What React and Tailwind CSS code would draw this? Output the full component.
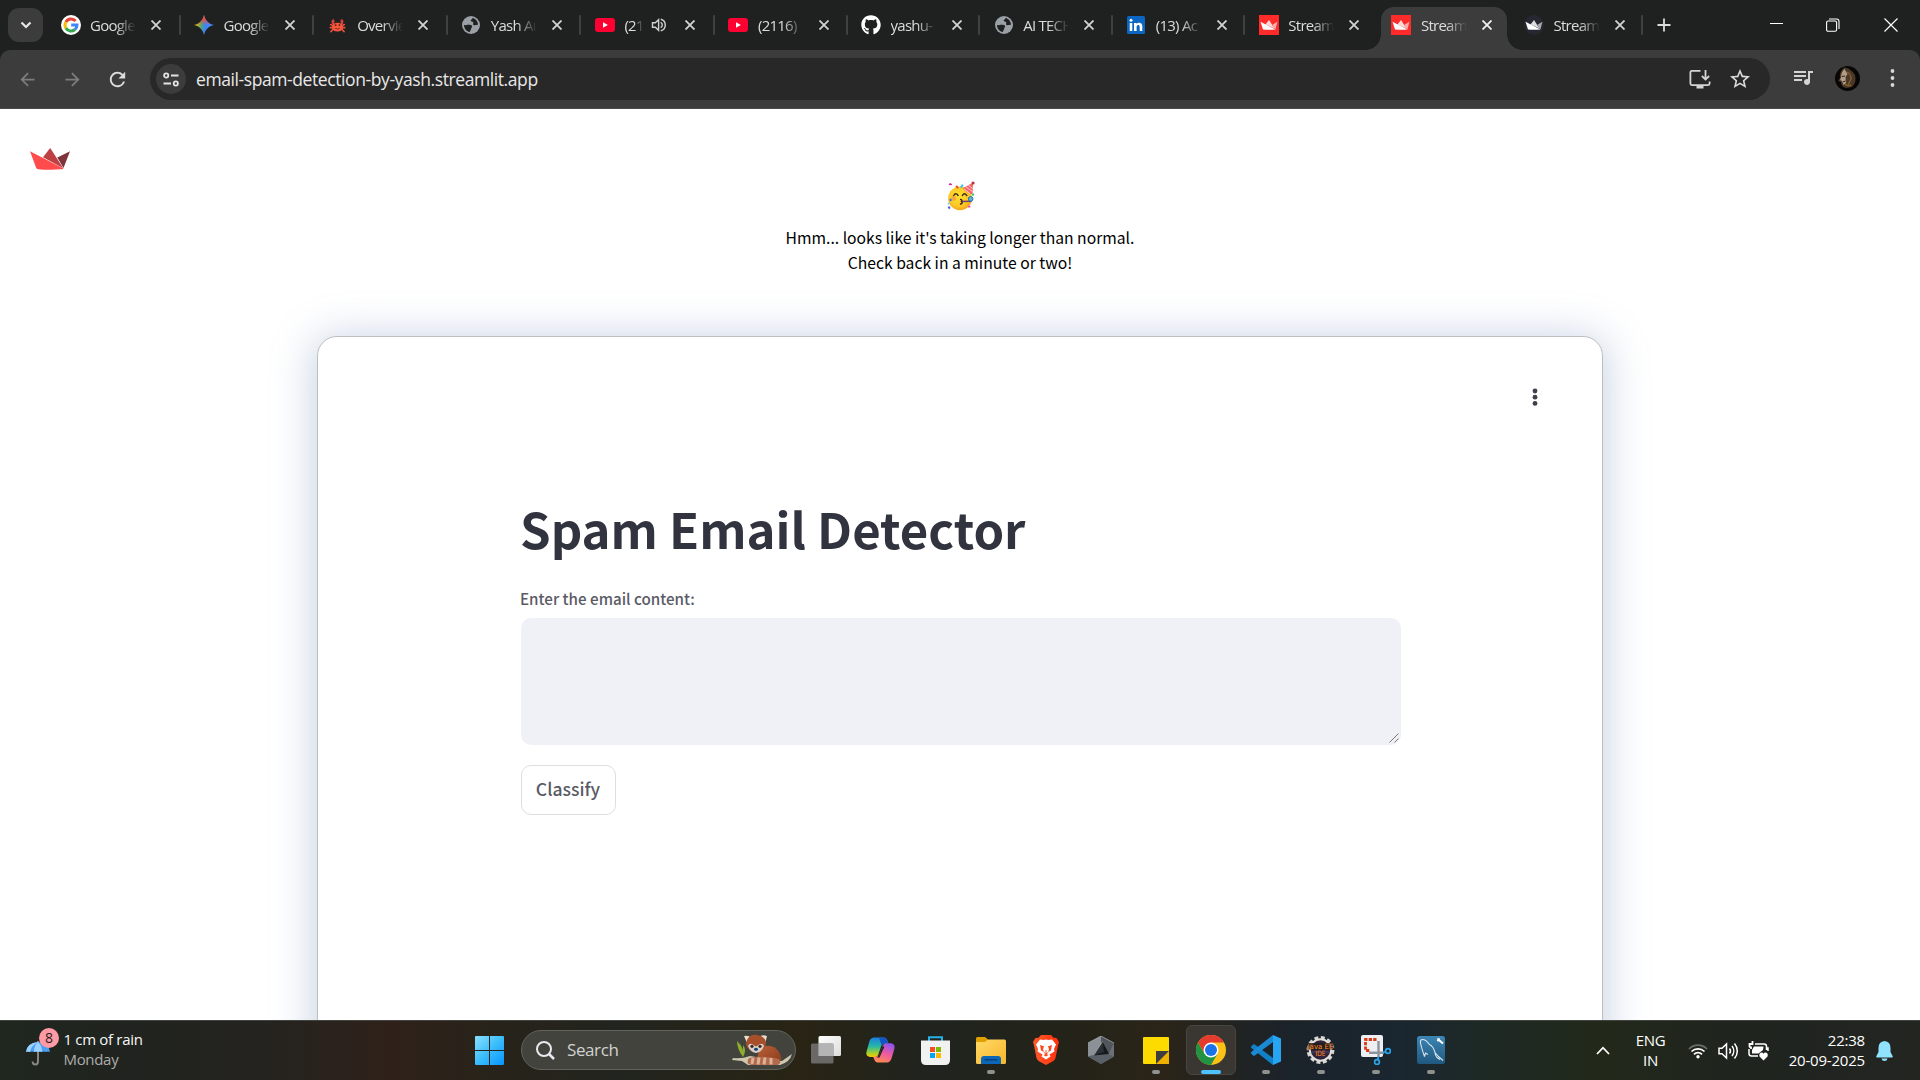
import React from "react";
import { FaGithub } from "react-icons/fa";
import { MdArrowBack, MdArrowForward, MdRefresh, MdStarOutline, MdQueueMusic } from "react-icons/md";

const UI = "font-['Open_Sans','Noto_Sans',sans-serif]";
const SRC = "font-['Noto_Sans_CJK_SC','Noto_Sans',sans-serif]";

/* ---------- favicons ---------- */
const Google = () => (
  <svg width="20" height="20" viewBox="0 0 20 20">
    <circle cx="10" cy="10" r="10" fill="#fff" />
    <g fill="none" strokeWidth="3">
      <path d="M14.6 6A6 6 0 0 0 4.9 6.9" stroke="#ea4335" />
      <path d="M4.9 6.9A6 6 0 0 0 4.9 13.1" stroke="#fbbc05" />
      <path d="M4.9 13.1A6 6 0 0 0 14 14.5" stroke="#34a853" />
      <path d="M14 14.5A6 6 0 0 0 16 10H10.2" stroke="#4285f4" />
    </g>
  </svg>
);
const Gemini = () => (
  <svg width="20" height="20" viewBox="0 0 20 20">
    <defs>
      <linearGradient id="gm" x1="0" y1="0.5" x2="1" y2="0.6">
        <stop offset="0.05" stopColor="#fbbc04" />
        <stop offset="0.35" stopColor="#57a86a" />
        <stop offset="0.55" stopColor="#3c84f5" />
        <stop offset="1" stopColor="#4b8bff" />
      </linearGradient>
      <linearGradient id="gm2" x1="0" y1="0" x2="0" y2="1">
        <stop offset="0.2" stopColor="#f04a3e" />
        <stop offset="0.5" stopColor="#f04a3e" stopOpacity="0" />
      </linearGradient>
    </defs>
    <path d="M10 0C11.300 5.500 14.500 8.700 20 10 14.500 11.300 11.300 14.500 10 20 8.700 14.500 5.500 11.300 0 10 5.500 8.700 8.700 5.500 10 0Z" fill="url(#gm)" />
    <path d="M10 0C11.300 5.500 14.500 8.700 20 10 14.500 11.300 11.300 14.500 10 20 8.700 14.500 5.500 11.300 0 10 5.500 8.700 8.700 5.500 10 0Z" fill="url(#gm2)" />
  </svg>
);
const Crab = () => (
  <svg width="17" height="17" viewBox="0 0 18 18">
    <g stroke="#e8503a" strokeWidth="1.700" fill="none" strokeLinecap="round">
      <path d="M4.500 9.500 1.800 8M4.500 11 1.300 11.200M5 12.500 2 15.500M13.500 9.500 16.200 8M13.500 11l3.200.2M13 12.500l3 3M4 6.500 5.500 8M14 6.500 12.500 8" />
    </g>
    <ellipse cx="9" cy="10.800" rx="5.800" ry="4.600" fill="#f4573c" />
    <path d="M5.500 2.300C2.500 2 2 5 3.600 6.800 5.500 6.700 6.500 5 6.200 3.500L4.600 4.700ZM12.500 2.300c3-.3 3.500 2.700 1.900 4.500-1.900-.1-2.900-1.800-2.600-3.300l1.600 1.200Z" fill="#d9423f" />
    <circle cx="7" cy="8.600" r="1" fill="#5d1a1a" />
    <circle cx="11" cy="8.600" r="1" fill="#5d1a1a" />
    <path d="M6.500 12q2.500 1.500 5 0" stroke="#8f2420" fill="none" />
  </svg>
);
const Globe = () => (
  <svg width="18" height="18" viewBox="0 0 18 18">
    <circle cx="9" cy="9" r="9" fill="#9aa0a6" />
    <path d="M10.500 1.900C9.500 3 8 3 7.500 4.200 7 5.500 8.500 6.300 7.800 7.200 7 8 5.800 7 5.200 8.300 6.500 9.200 9 8.500 10 9.800 10.500 11 9.300 11.600 9.200 12.600 9 14 8.200 14.500 7.800 16 4.500 15.500 2 12.500 2 9 4 9.300 6.500 9.200 5.200 8.300 6 7 7 8 7.800 7.200 8.500 6.300 7 5.500 7.500 4.200 8 3 9.500 3 10.500 1.900Z" fill="#1f2120" />
    <path d="M10.600 2C10.200 3.500 8.900 3.500 8.600 4.800 9 6 10.600 5.300 11.200 6.200 11.600 7.500 10.500 8 11.500 8.900 13 9.700 14.300 8.500 16 8.800 15.900 5.500 13.800 2.700 10.600 2Z" fill="#1f2120" />
  </svg>
);
const YouTube = () => (
  <svg width="20" height="14" viewBox="0 0 20 14">
    <rect width="20" height="14" rx="3" fill="#ff0033" />
    <path d="M8 4.200 12.900 7 8 9.800Z" fill="#fff" />
  </svg>
);
const LinkedIn = () => (
  <svg width="18" height="18" viewBox="0 0 18 18">
    <rect width="18" height="18" rx="1.500" fill="#0a66c2" />
    <path d="M2.700 6.900h2.600V15H2.700ZM7 6.900h2.500V8c.9-1.700 5.800-2.300 5.800 2.300V15h-2.600v-4.100c0-2.700-3.100-2.400-3.100 0V15H7Z" fill="#fff" />
    <circle cx="4" cy="4.200" r="1.500" fill="#fff" />
  </svg>
);
const CrownShape = ({ a, b, c }) => (
  <>
    <path d="M10 5 13.700 10.700 16.800 14 6.500 9.400Z" fill={b} />
    <path d="M18.500 6.800 13.400 9.700 16.300 14.500Z" fill={c} />
    <path d="M1.500 6.800 16.500 14.500Q10 15.200 4 14.500Z" fill={a} />
  </>
);
const CrownRed = () => (
  <svg width="20" height="20" viewBox="0 0 20 20">
    <rect width="20" height="20" fill="#ff2b2b" />
    <CrownShape a="#fff" b="#ffdada" c="#ffadad" />
  </svg>
);
const CrownDark = () => (
  <svg width="20" height="20" viewBox="0 0 20 20">
    <circle cx="10" cy="10" r="10" fill="#262730" />
    <CrownShape a="#fff" b="#dcdce0" c="#a9a9b2" />
  </svg>
);

const CloseX = ({ color = "#dadada" }) => (
  <svg width="10" height="10" viewBox="0 0 10 10">
    <path d="M.5.5l9 9M9.500.5l-9 9" stroke={color} strokeWidth="1.800" />
  </svg>
);
const TabSpeaker = () => (
  <svg width="16" height="16" viewBox="0 0 16 16" fill="none" stroke="#d0d0d0" strokeWidth="1.400">
    <path d="M1.500 5.800h2.800L7.600 2.700v10.600L4.300 10.200H1.500ZM9.600 5.300a3 3 0 0 1 0 5.400M9.800 2.200a6 6 0 0 1 0 11.600" />
  </svg>
);

const TABS = [
  { icon: <Google />, title: "Google" },
  { icon: <Gemini />, title: "Google" },
  { icon: <Crab />, title: "Overvie" },
  { icon: <Globe />, title: "Yash Au" },
  { icon: <YouTube />, title: "(21", audio: true },
  { icon: <YouTube />, title: "(2116)" },
  { icon: <FaGithub size={20} color="#fff" />, title: "yashu-" },
  { icon: <Globe />, title: "AI TECH" },
  { icon: <LinkedIn />, title: "(13) Ac" },
  { icon: <CrownRed />, title: "Stream", nosep: true },
  { icon: <CrownRed />, title: "Stream", active: true, nosep: true },
  { icon: <CrownDark />, title: "Stream" },
];

function Tab({ icon, title, audio, active, nosep, wide }) {
  return (
    <div className={`relative flex h-[50px] shrink-0 items-center ${wide ? "w-[133.600px]" : "w-[132.600px]"}`}>
      {active && (
        <div className="absolute top-[7px] -left-[12px] flex h-[43px] w-[156px]">
          <div className="h-[15px] w-[15px] self-end bg-[radial-gradient(circle_at_0_0,#1f2120_14.500px,#3c3c3c_15px)]" />
          <div className="flex-1 rounded-t-[13px] bg-[#3c3c3c]" />
          <div className="h-[15px] w-[15px] self-end bg-[radial-gradient(circle_at_100%_0,#1f2120_14.500px,#3c3c3c_15px)]" />
        </div>
      )}
      <div className="relative ml-[13px] flex w-[21px] justify-center">{icon}</div>
      <div
        className={`relative ml-[9px] overflow-hidden text-[15px] leading-5 tracking-[-0.750px] whitespace-pre text-[#dcdcdc] ${
          audio ? "w-[19px]" : "w-[46px]"
        } [mask-image:linear-gradient(to_right,#000_55%,transparent)]`}
      >
        {title}
      </div>
      {audio && <div className="ml-[8px] w-[19px]"><TabSpeaker /></div>}
      <div className="relative ml-[15px] flex">
        <CloseX color={active ? "#f0f0f0" : "#d2d4d3"} />
      </div>
      {!nosep && <div className="ml-auto h-5 w-0.5 rounded-full bg-[#3f4140]" />}
    </div>
  );
}

function TabStrip() {
  return (
    <div className="flex h-[50px] bg-[#1f2120]">
      <div className="mt-2 ml-2 flex h-[34px] w-[35px] shrink-0 items-center justify-center rounded-[11px] bg-[#3c3c3c]">
        <svg width="12" height="8" viewBox="0 0 12 8" fill="none" stroke="#e8e8e8" strokeWidth="2.200">
          <path d="M1.500 1.500 6 6l4.500-4.500" />
        </svg>
      </div>
      <div className="ml-[4px] flex">
        {TABS.map((t, i) => <Tab key={i} {...t} wide={i < 5} />)}
      </div>
      <div className="flex items-center pl-[14px]">
        <svg width="14" height="14" viewBox="0 0 14 14" stroke="#dcdcdc" strokeWidth="1.800"><path d="M7 .5v13M.5 7h13" /></svg>
      </div>
      <div className="mr-[22px] ml-auto flex items-center">
        <svg width="13" height="14" viewBox="0 0 13 14" stroke="#fff" strokeWidth="1"><path d="M0 5.500h13" /></svg>
        <svg className="ml-[43px]" width="14" height="14" viewBox="0 0 14 14" fill="none" stroke="#fff" strokeWidth="1.100">
          <rect x=".6" y="3" width="10" height="10.300" rx="1.500" />
          <path d="M3 1h7.500Q13 1 13 3.500V11" />
        </svg>
        <svg className="ml-[44px]" width="14" height="14" viewBox="0 0 14 14" stroke="#fff" strokeWidth="1.200"><path d="M.5.5l13 13M13.500.5l-13 13" /></svg>
      </div>
    </div>
  );
}

function Toolbar() {
  return (
    <div className="h-[59px] bg-[#1f2120]">
      <div className="flex h-[59px] items-start rounded-t-[10px] border-b border-[#4a4a4a] bg-[#3c3c3c] pt-2">
        <div className="flex h-[42px] w-[150px] shrink-0 items-center">
          <MdArrowBack className="ml-[17px] text-[#7d7d7d]" size={21} />
          <MdArrowForward className="ml-[24px] text-[#7d7d7d]" size={21} />
          <MdRefresh className="ml-[23px] text-[#dcdcdc]" size={23} />
        </div>
        <div className="flex h-[42px] w-[1620px] shrink-0 items-center rounded-full bg-[#282828]">
          <div className="ml-[6px] flex size-[30px] items-center justify-center rounded-full bg-[#3c3c3c]">
            <svg width="16" height="15" viewBox="0 0 16 15" fill="none" stroke="#e3e3e3" strokeWidth="1.800">
              <circle cx="3.200" cy="3.500" r="2.100" />
              <path d="M8 3.500h7.500M.5 11.500H8" />
              <circle cx="12.800" cy="11.500" r="2.100" />
            </svg>
          </div>
          <div className="ml-[10px] text-[17.500px] leading-6 tracking-[-0.410px] text-[#e8e8e8]">
            email-spam-detection-by-yash.streamlit.app
          </div>
          <div className="ml-auto flex items-center gap-[17px] pr-[18px] text-[#dcdcdc]">
            <svg width="22" height="20" viewBox="0 0 22 20" fill="none" stroke="#d4d4d4" strokeWidth="1.800">
              <path d="M11.500 1.900H2.900Q1.400 1.900 1.400 3.400v11.200q0 1.500 1.500 1.500h16.200q1.500 0 1.500-1.500V12.500" />
              <path d="M7.500 18h7" strokeWidth="3" />
              <path d="M16.500 1v9M12.900 7l3.600 3.600L20.100 7" />
            </svg>
            <MdStarOutline size={24} />
          </div>
        </div>
        <div className="flex h-[42px] items-center">
          <MdQueueMusic className="-mt-1 ml-[21px] text-[#d4d4d4]" size={24} />
          <svg className="-mt-0.5 ml-[20px]" width="25" height="25" viewBox="0 0 25 25">
            <defs>
              <clipPath id="av"><circle cx="12.500" cy="12.500" r="12.500" /></clipPath>
            </defs>
            <g clipPath="url(#av)">
              <rect width="25" height="25" fill="#080706" />
              <path d="M9 1.500Q4 6 5 12L3 15l3 1q0 5 5 6l6-1q5-5 3-12Q15 1.500 9 1.500Z" fill="#4a3828" />
              <path d="M9.500 3Q6 6 6.300 11L5 14l2 1L8.500 19l2.500-2-.5-6 2-3Z" fill="#b09c88" />
              <path d="M12 6q4 2 4 7l-3 6M10 18q3 3 6 1" stroke="#8a632f" strokeWidth="1.200" fill="none" />
              <path d="M7 10.500l3-.5M8 16l2.500-1" stroke="#30231c" />
            </g>
          </svg>
          <svg className="-mt-0.5 ml-[30px]" width="5" height="22" viewBox="0 0 5 22" fill="#d8d8d8">
            <circle cx="2.500" cy="4" r="1.900" /><circle cx="2.500" cy="11" r="1.900" /><circle cx="2.500" cy="18" r="1.900" />
          </svg>
        </div>
      </div>
    </div>
  );
}

/* ---------- page ---------- */
const PartyFace = () => (
  <svg width="29" height="31" viewBox="0 0 30 32">
    <defs>
      <radialGradient id="pf" cx=".45" cy=".4" r=".65">
        <stop offset="0" stopColor="#fde030" /><stop offset=".65" stopColor="#fbc926" /><stop offset="1" stopColor="#f29a1a" />
      </radialGradient>
    </defs>
    <circle cx="14.500" cy="19" r="12.300" fill="url(#pf)" />
    <circle cx="8" cy="19" r="2.500" fill="#f58a4a" opacity=".6" />
    <path d="M17.500 8.500 28 2.500 27.500 15Q21 13.500 17.500 8.500Z" fill="#f7656a" />
    <path d="M20.500 7l7 5M23 5.300l4.700 3.500M18.800 9.300l6 4.600" stroke="#ffd0d0" strokeWidth="1" />
    <circle cx="28" cy="3" r="1.600" fill="#b7333e" />
    <path d="M8 16q2-3.500 4.500 0M17 16q2-3.500 4.500 0" stroke="#3d2c1c" strokeWidth="1.500" fill="none" strokeLinecap="round" />
    <path d="M14.500 20q3 .3 1.500 2.200 2.200 1.400-1.500 3" stroke="#4a2418" strokeWidth="1.500" fill="none" />
    <path d="M16.500 22.300l10-.3" stroke="#6a3f70" strokeWidth="1.500" />
    <circle cx="25.500" cy="19.500" r="2.400" fill="#5ab3d8" stroke="#2d6ea0" strokeWidth="1" />
    <path d="M3 4.700q1.500-2 3 0Z" fill="#e0199b" stroke="#e0199b" />
    <path d="M10.500 6l2 2.500" stroke="#e8443e" strokeWidth="2" />
    <path d="M15 7.500q2-.5 2-3" stroke="#2fc6e8" strokeWidth="2" fill="none" />
    <path d="M4 20l1.500 1.500M2.500 27.500l1.500 2" stroke="#4169e1" strokeWidth="2.200" />
    <path d="M2 25l2-1.500" stroke="#73cdee" strokeWidth="1.500" />
    <path d="M27 15.500l2-.8" stroke="#3ec66a" strokeWidth="2" />
    <path d="M23 28l2-1" stroke="#ee4aa6" strokeWidth="2.200" />
  </svg>
);

function Page() {
  return (
    <div className={`h-[911px] overflow-hidden bg-white ${SRC}`}>
      <div className="flex h-[61px] items-end pl-[30px]">
        <svg width="40" height="22" viewBox="0 0 40 22">
          <path d="M40 3.300 27.300 9.500 33.500 20Z" fill="#7d353b" />
          <path d="M20.200 0 13 9.300 33.300 20.300Z" fill="#bd4043" />
          <path d="M0 3.300 33.400 20.400Q33 21.300 31 21.300 20 22.300 8 21.200 6.600 21 6.100 19.700Z" fill="#ff4b4b" />
        </svg>
      </div>
      <div className="flex h-[166px] flex-col items-center pt-[10px]">
        <PartyFace />
        <div className="mt-[14px] text-center text-[15.700px] leading-[25px] text-black">
          Hmm... looks like it's taking longer than normal.
          <br />
          Check back in a minute or two!
        </div>
      </div>
      <div className="mx-auto h-[760px] w-[1286px] rounded-[20px] border border-[#bdbfc3] bg-white pl-[202px] shadow-[0_4px_42px_4px_rgba(120,145,190,0.4)]">
        <div className="flex h-[110px] items-start justify-end pt-[51px] pr-[64.500px]">
          <svg width="6" height="18" viewBox="0 0 6 18" fill="#3f404b">
            <circle cx="3" cy="3" r="2.400" /><circle cx="3" cy="9.200" r="2.400" /><circle cx="3" cy="15.400" r="2.400" />
          </svg>
        </div>
        <div className="mt-[49px] h-[64px] text-[49.100px] leading-[64px] font-bold whitespace-nowrap text-[#31333f]">
          Spam Email Detector
        </div>
        <div className="mt-[26px] h-[24px] text-[15.200px] leading-6 font-medium text-[#5a5b65]">Enter the email content:</div>
        <div className="mt-[8px] ml-[0.500px] flex h-[127px] w-[880px] items-end justify-end rounded-[10px] bg-[#f0f1f6] pr-[2px] pb-[2px]">
          <svg width="10" height="10" viewBox="0 0 10 10" stroke="#777" strokeWidth="1"><path d="M.5 9.500l9-9M5.500 9.500l4-4" /></svg>
        </div>
        <div className="mt-[20px] ml-[0.500px] flex h-[50px] w-[95px] items-center justify-center rounded-[10px] border-[1.500px] border-[#dedee2] pb-[3px] text-[17.600px] leading-6 font-medium text-[#5a5b65]">
          Classify
        </div>
      </div>
    </div>
  );
}

/* ---------- taskbar icons ---------- */
const TaskView = () => (
  <svg width="30" height="28" viewBox="0 0 30 28">
    <defs><linearGradient id="tv" x1="0" y1="0" x2="1" y2="1"><stop offset="0" stopColor="#fff" /><stop offset="1" stopColor="#dcdcdc" /></linearGradient></defs>
    <rect x="7.500" y="0" width="22.500" height="20" rx="1.500" fill="url(#tv)" />
    <rect x="0" y="7.500" width="22.500" height="20" rx="1.500" fill="#757575" opacity=".85" />
    <rect x="7.500" y="7.500" width="15" height="12.500" fill="#b4b4b4" />
  </svg>
);
const Copilot = () => (
  <svg width="29" height="26" viewBox="0 0 29 26">
    <defs>
      <linearGradient id="cp1" x1="0" y1="0" x2="0" y2="1"><stop offset="0" stopColor="#1b7fe0" /><stop offset=".45" stopColor="#25b7a6" /><stop offset=".8" stopColor="#a5d12c" /><stop offset="1" stopColor="#ffc700" /></linearGradient>
      <linearGradient id="cp2" x1=".7" y1="0" x2=".3" y2="1"><stop offset="0" stopColor="#8f54f0" /><stop offset=".5" stopColor="#ee5aa0" /><stop offset="1" stopColor="#ff8a50" /></linearGradient>
    </defs>
    <path d="M8 .5H18Q20.500.5 21.500 4L22.500 6.500H19Q16 6.500 15 9.500L12.500 17Q11.500 20 9 20H4Q-.8 19.500.7 14L3.500 4Q4.800.5 8 .5Z" fill="url(#cp1)" />
    <path d="M13 .5h5Q20.500.5 21.500 4l1 2.500H19Q16.500 6.500 15.500 8Z" fill="#1455c6" />
    <path d="M21 25.500H12Q9 25.500 7.700 21L7 19.800h3Q13 19.500 14 16.500L16.500 9Q17.500 6.300 20 6.300H25Q29.500 7 28.300 12L25.500 21.500Q24 25.500 21 25.500Z" fill="url(#cp2)" />
    <path d="M16.300 9.500h2.200L13.500 20.500H11Q13 19 14 16.500Z" fill="#24231c" />
  </svg>
);
const Store = () => (
  <svg width="29" height="29" viewBox="0 0 29 29">
    <path d="M8 6V1.200h13V6" fill="none" stroke="#27b0e8" strokeWidth="2" />
    <path d="M0 4.500h29V24q0 5-5 5H5q-5 0-5-5Z" fill="#f1f1f1" />
    <path d="M9 11h5v5H9Z" fill="#f25022" /><path d="M15 11h5v5h-5Z" fill="#7fba00" />
    <path d="M9 17h5v5H9Z" fill="#00a4ef" /><path d="M15 17h5v5h-5Z" fill="#ffb900" />
  </svg>
);
const Explorer = () => (
  <svg width="30" height="27" viewBox="0 0 30 27">
    <defs><linearGradient id="fx" x1="0" y1="0" x2="1" y2="1"><stop offset="0" stopColor="#ffd966" /><stop offset="1" stopColor="#f8b62c" /></linearGradient></defs>
    <path d="M0 1.500Q0 0 1.500 0H9l3 2.500V8H0Z" fill="#e0a100" />
    <path d="M0 5h9l3-2.500H28.500Q30 2.500 30 4V25.500Q30 27 28.500 27H1.500Q0 27 0 25.500Z" fill="url(#fx)" />
    <path d="M5 27V22q0-3 3-3H22q3 0 3 3v5Z" fill="#0b67b8" />
    <path d="M8.500 22.800h13" stroke="#063f78" strokeWidth="1.400" />
  </svg>
);
const Brave = () => (
  <svg width="26" height="30" viewBox="0 0 26 30">
    <defs><linearGradient id="br" x1="0" y1="0" x2="1" y2="0"><stop offset="0" stopColor="#ff5a2b" /><stop offset="1" stopColor="#ff2f0b" /></linearGradient></defs>
    <path d="M8 0H18L20.500 2.800 23.500 3 26 7 25 10.500 22.500 23Q22 25 20 26.200L13 30 6 26.200Q4 25 3.500 23L1 10.500 0 7 2.500 3 5.500 2.800Z" fill="url(#br)" />
    <path d="M7 4.500 10.500 5 13 4.500 15.500 5 19 4.500 23 9.500 21 14 21.500 16.500 16.500 19.500 17.500 21.500 13 24.500 8.500 21.500 9.500 19.500 4.500 16.500 5 14 3 9.500Z" fill="#fff" />
    <path d="M7 10 11 11.200 10 14.500 11 17 8 15.500ZM19 10 15 11.200 16 14.500 15 17 18 15.500ZM10.500 20 13 18.700 15.500 20 13 21.600Z" fill="#fb4a20" />
    <path d="M13 15v3.500M10.800 17.500 13 18.700 15.200 17.500" stroke="#fb4a20" strokeWidth=".9" fill="none" />
  </svg>
);
const Cursor = () => (
  <svg width="26" height="28" viewBox="0 0 26 28">
    <path d="M13 0 26 7V20.500L13 28 0 20.500V7Z" fill="#6a7076" />
    <path d="M0 7 13 0V8L5 19 0 20.500Z" fill="#8b9196" />
    <path d="M13 0 26 7 20 19 13 8Z" fill="#50565c" />
    <path d="M0 20.500 6 19 20 18 26 20.500 13 28Z" fill="#596067" />
    <path d="M14.500 5.500 21 18 5.500 19.500Z" fill="#16191c" />
    <path d="M14.500 5.500 16 16 5.500 19.500Z" fill="#2b3034" />
    <path d="M14.500 5.500 5.500 19.500" fill="none" stroke="#b4b9bd" strokeWidth=".8" />
    <path d="M0 7 13 0l13 7" fill="none" stroke="#a5aaae" strokeWidth=".7" />
  </svg>
);
const Sticky = () => (
  <svg width="26" height="27" viewBox="0 0 26 27">
    <rect width="26" height="27" rx="1" fill="#fddb00" />
    <path d="M13 27 26 14V27Z" fill="#f0b000" />
    <path d="M13 14H26L13 27Z" fill="#3d3d3d" />
  </svg>
);
const Chrome = () => (
  <svg width="30" height="30" viewBox="0 0 30 30">
    <circle cx="15" cy="15" r="15" fill="#fbc116" />
    <path d="M2 7.500A15 15 0 0 1 28 7.500H15L8.500 18.800Z" fill="#e33b2e" />
    <path d="M2 7.500A15 15 0 0 0 15 30L21.500 18.750 8.500 18.750Z" fill="#229342" />
    <circle cx="15" cy="15" r="7.500" fill="#fff" />
    <circle cx="15" cy="15" r="6" fill="#1a73e8" />
  </svg>
);
const VSCode = () => (
  <svg width="30" height="30" viewBox="0 0 30 30">
    <path d="M0 11.500 2.200 9.500Q3 9 3.800 9.500L22 23V30L.3 13Q-.3 12.300 0 11.500Z" fill="#1080c8" />
    <path d="M0 18.500 2.200 20.500Q3 21 3.800 20.500L22 7V0L.3 17Q-.3 17.700 0 18.500Z" fill="#1a8ad4" />
    <path d="M22 0 30 3.500V26.500L22 30Z" fill="#27a4f2" />
  </svg>
);
const JavaEE = () => (
  <svg width="29" height="28" viewBox="0 0 29 28">
    <circle cx="14.500" cy="14" r="12.300" fill="none" stroke="#d8d6d2" strokeWidth="3.200" strokeDasharray="3.900 2.540" />
    <circle cx="14.500" cy="14" r="10.700" fill="#30233a" stroke="#e0deda" strokeWidth="2" />
    <path d="M5 12.500h19M6 16h17" stroke="#5f4b73" strokeWidth=".8" />
    <rect x="1.500" y="7" width="26" height="6.500" fill="#24191a" opacity=".8" />
    <g fill="#ff8c1e" fontFamily="DejaVu Sans, sans-serif" fontSize="7.200" textAnchor="middle">
      <text x="14.500" y="12.700" textLength="26" lengthAdjust="spacingAndGlyphs">Java EE</text>
      <text x="14.500" y="19.800" textLength="10" lengthAdjust="spacingAndGlyphs">IDE</text>
    </g>
  </svg>
);
const Snip = () => (
  <svg width="30" height="30" viewBox="0 0 30 30">
    <rect width="22" height="22" rx="2" fill="#eeeff2" />
    <path d="M15.500 4.500H4.500V15.500H9" fill="none" stroke="#d83b16" strokeWidth="2.800" strokeDasharray="3.300 1.200" />
    <path d="M17.500 6V22M8 17.800H23" stroke="#8d949c" strokeWidth="2.400" />
    <circle cx="27" cy="16" r="2.400" fill="none" stroke="#2aa4ea" strokeWidth="1.700" />
    <circle cx="16" cy="27" r="2.400" fill="none" stroke="#2aa4ea" strokeWidth="1.700" />
    <path d="M21.500 17.800 25 16.500M17.500 21.500 16.500 25" stroke="#2aa4ea" strokeWidth="1.700" />
  </svg>
);
const MySQL = () => (
  <svg width="28" height="28" viewBox="0 0 28 28">
    <defs><linearGradient id="my" x1="0" y1="0" x2="0" y2="1"><stop offset="0" stopColor="#3d86b4" /><stop offset="1" stopColor="#20587f" /></linearGradient></defs>
    <rect width="28" height="28" rx="2.500" fill="url(#my)" />
    <path d="M7.500 20.500Q4.500 12 3.500 7 3 3.500 5.500 3.500 9 3.500 12.500 8.500 16.500 10.500 18 16.500L21.500 20.500 26 24.500M18 16.500Q18 19 20 21.500L23 23.500M7.500 20.500 8.500 17 11 18.500" fill="none" stroke="#d5e4ee" strokeWidth="1.100" />
    <path d="M20.500 2.500l2 2L26 7.500" stroke="#fff" strokeWidth="2" fill="none" />
    <path d="M20 4.500Q22.500 5.500 22.500 2.500" stroke="#fff" strokeWidth="1.300" fill="none" />
  </svg>
);
const APPS = [
  { icon: <TaskView /> },
  { icon: <Copilot /> },
  { icon: <Store /> },
  { icon: <Explorer />, open: true },
  { icon: <Brave /> },
  { icon: <Cursor /> },
  { icon: <Sticky />, open: true },
  { icon: <Chrome />, active: true },
  { icon: <VSCode />, open: true },
  { icon: <JavaEE />, open: true },
  { icon: <Snip />, open: true },
  { icon: <MySQL />, open: true },
];

const RedPanda = () => (
  <svg width="60" height="32" viewBox="0 0 60 32">
    <defs>
      <linearGradient id="rp" x1="0" y1="0" x2="1" y2="1"><stop offset="0" stopColor="#b96336" /><stop offset="1" stopColor="#8c3a20" /></linearGradient>
    </defs>
    <path d="M11 24Q13 14 5 7q0 8 6 16Q15 16 11 11" fill="#8cae2c" />
    <path d="M1 24Q10 25 18 22L50 27 60 20Q58 28 48 31H16L10 27 0 26Z" fill="#cfc8ae" />
    <path d="M28 14Q40 8 47 18 52 26 46 29L24 27Z" fill="url(#rp)" />
    <path d="M17 24Q32 21 47 25 50 30 45 31H20Q13 30 17 24Z" fill="#b06a4c" />
    <path d="M21 24l-1 6M27 23.500l-1 7M33 23.500l-1 7M39 24v6.500" stroke="#e0b096" strokeWidth="3" />
    <path d="M12 2Q17 1 19 4L15 9ZM35 2Q30 0 27 3L33 10Z" fill="#e9ddcd" />
    <path d="M15 6Q18 0 25 1 33 2 34 9 34 16 25 18 15 17 14 10Z" fill="#a64f2a" />
    <path d="M16 12Q17 9 20 10L24 12.500 28 10Q31 9 32 12 30 18 24 19 18 18 16 12Z" fill="#d9cfc4" />
    <circle cx="20" cy="12.300" r="1.600" fill="#3e2a24" />
    <circle cx="28" cy="12.300" r="1.600" fill="#3e2a24" />
    <ellipse cx="24" cy="15.300" rx="2" ry="1.500" fill="#173f7c" />
  </svg>
);

function Taskbar() {
  return (
    <div className="flex h-[60px] border-t border-[#41443f] bg-[linear-gradient(90deg,#1f271f_0px,#21231f_150px,#25231f_270px,#2f211a_390px,#28231a_490px,#22241f_620px,#292414_800px,#20241f_930px,#232319_1060px,#2b2418_1160px,#1b232a_1290px,#1a2630_1400px,#1d2925_1480px,#22291a_1600px,#1f241f_1740px,#232521_1920px)] text-white">
      <div className="flex w-[475px] shrink-0 pt-[5px] pl-[25px]">
        <div className="relative h-[50px] w-[38.500px]">
          <svg className="mt-[15px]" width="26" height="25" viewBox="0 0 26 25">
            <path d="M13 0v20q0 3.500-2.700 3.500T7.700 20.500" fill="none" stroke="#8b8583" strokeWidth="2" />
            <path d="M1 11Q2 2 13 1 24 2 25 11q-2-1-4 0-2-1-4 0-2-1-4 0-2-1-4 0-2-1-4 0-2-1-4 0Z" fill="#4b9ff0" />
            <path d="M1 11Q2 2 13 1 6 5 5 11q-2-1-4 0ZM9 11Q9 4 13 1q4 3 4 10-2-1-4 0-2-1-4 0Z" fill="#9bd0ff" />
          </svg>
          <div className="absolute top-[2px] left-[14px] flex size-5 items-center justify-center rounded-full bg-[#ff99a4] pb-px text-[14px] leading-5 text-[#1f1f1f]">8</div>
        </div>
        <div className="text-[15px] leading-5 tracking-[-0.320px] text-[#f8f8f8]">
          <div className="pt-[3px]">1 cm of rain</div>
          <div className="text-[#adadaa]">Monday</div>
        </div>
      </div>
      <div className="flex w-[46px] shrink-0 items-start pt-[15px]">
        <svg width="29" height="29" viewBox="0 0 29 29">
          <defs><linearGradient id="wn" x1="0" y1="0" x2="1" y2="1"><stop offset="0" stopColor="#8adfff" /><stop offset=".5" stopColor="#3bbdfb" /><stop offset="1" stopColor="#0795ff" /></linearGradient></defs>
          <path d="M1 0H14V14H0V1Q0 0 1 0ZM15 0H28Q29 0 29 1V14H15ZM0 15H14V29H1Q0 29 0 28ZM15 15H29V28Q29 29 28 29H15Z" fill="url(#wn)" />
        </svg>
      </div>
      <div className="mt-[9px] flex h-[40px] w-[275px] shrink-0 items-center rounded-full border border-[#62635d] bg-[#42433d]">
        <svg className="ml-[14px]" width="19" height="19" viewBox="0 0 19 19" fill="none" stroke="#e8eaf0" strokeWidth="2">
          <circle cx="8" cy="8" r="7" /><path d="M13 13l5 5" strokeWidth="2.500" />
        </svg>
        <div className="ml-[12px] text-[17px] leading-6 tracking-[-0.400px] text-[#d2d2d0]">Search</div>
        <div className="mr-[3px] ml-auto"><RedPanda /></div>
      </div>
      <div className="ml-[2px] flex">
        {APPS.map((a, i) => (
          <div key={i} className="flex w-[55px] justify-center pt-[4px]">
            <div className={`flex h-[50px] w-[50px] flex-col items-center rounded-[6px] ${a.active ? "border border-[#474540] bg-[#3a3733]" : "pt-px"}`}>
              <div className="flex h-[45px] items-center pt-[3px]">{a.icon}</div>
              {a.active && <div className="-mt-px h-1 w-5 shrink-0 rounded-full bg-[#4cc2ff]" />}
              {a.open && <div className="-mt-px h-1 w-2 shrink-0 rounded-full bg-[#8f918f]" />}
            </div>
          </div>
        ))}
      </div>
      <div className="ml-auto flex h-[59px] items-center pr-[27px]">
        <svg width="14" height="9" viewBox="0 0 14 9" fill="none" stroke="#fff" strokeWidth="1.800"><path d="M1 8l6-6.300L13 8" /></svg>
        <div className="ml-[22px] w-[38px] pb-px text-center text-[15px] leading-5 tracking-[-0.350px]">ENG<br />IN</div>
        <svg className="ml-[18px]" width="20" height="16" viewBox="0 0 20 16" fill="none" stroke="#fff" strokeWidth="1.700">
          <path d="M1 6A12.500 12.500 0 0 1 19 6" stroke="#6b6d6a" />
          <path d="M3.500 8.500a9.300 9.300 0 0 1 13 0M6 11.300a5.700 5.700 0 0 1 8 0" />
          <circle cx="10" cy="13.800" r="1.700" fill="#fff" stroke="none" />
        </svg>
        <svg className="ml-[10px]" width="21" height="18" viewBox="0 0 21 18" fill="none" stroke="#fff" strokeWidth="1.500">
          <path d="M1 6.300H4L8.500 2V16L4 11.700H1ZM11.500 6.500a4 4 0 0 1 0 5M14 4a8 8 0 0 1 0 10M16.500 1.500a11.500 11.500 0 0 1 0 15" />
        </svg>
        <svg className="ml-[9px]" width="21" height="20" viewBox="0 0 21 20">
          <path d="M7 3h9q2.500 0 2.500 2.500V9M1 8v4.500Q1 15 3.500 15H10M18.500 7h1.500v3" fill="none" stroke="#fff" strokeWidth="1.500" />
          <path d="M6 5.500h9.500L15 9l-4.500 3.500H4V9Z" fill="#fff" />
          <path d="M4.500 0v3H1.500v2q0 1.500 1.500 1.500V8" fill="none" stroke="#fff" strokeWidth="1.800" />
          <path d="M15.500 19.500 11.500 15.500Q10.700 12 13.500 11.500 15 11.500 15.500 12.800 16 11.500 17.700 11.500 20.500 12 19.500 15.500Z" fill="#fff" />
        </svg>
        <div className="ml-[16.500px] w-[80px] pb-[2px] text-right text-[15px] leading-5 tracking-[-0.200px] whitespace-nowrap">22:38<br />20-09-2025</div>
        <svg className="ml-[11px]" width="17" height="20" viewBox="0 0 17 20" fill="#8fe3ff">
          <path d="M8.500 0Q14.500.5 14.500 7V11L16.800 15.500Q16.800 16.500 16 16.500H1Q.2 16.500.2 15.500L2.500 11V7Q2.500.5 8.500 0ZM5.500 17.500h6Q11 20 8.500 20T5.500 17.500Z" />
        </svg>
      </div>
    </div>
  );
}

export default function App() {
  return (
    <div className={`flex h-[1080px] w-[1920px] flex-col overflow-hidden bg-white ${UI}`}>
      <TabStrip />
      <Toolbar />
      <Page />
      <Taskbar />
    </div>
  );
}
